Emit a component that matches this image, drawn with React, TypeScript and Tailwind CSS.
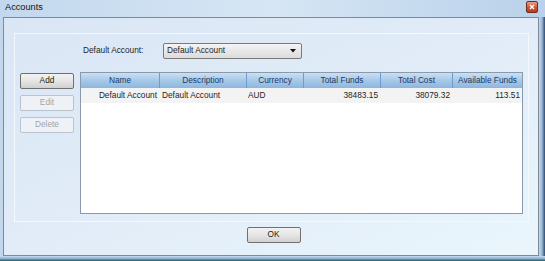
import { useState } from "react";

const columns = [
  { label: "Name", w: "w-[79px]" },
  { label: "Description", w: "w-[87px]" },
  { label: "Currency", w: "w-[57px]" },
  { label: "Total Funds", w: "w-[77px]" },
  { label: "Total Cost", w: "w-[72px]" },
  { label: "Available Funds", w: "flex-1" },
];

const rows = [
  {
    name: "Default Account",
    description: "Default Account",
    currency: "AUD",
    funds: "38483.15",
    cost: "38079.32",
    available: "113.51",
  },
];

function WinButton({ label, disabled }: { label: string; disabled?: boolean }) {
  return (
    <button
      className={`h-[16px] w-[54px] rounded-[2px] border text-[8.3px] leading-none ${
        disabled
          ? "border-[#b8c3cf] bg-[#eef2f6] text-[#a0a6ad]"
          : "border-[#707070] bg-gradient-to-b from-[#f2f2f2] via-[#e6e6e6] to-[#d0d0d0] text-[#1a1a1a]"
      }`}
    >
      {label}
    </button>
  );
}

export default function App() {
  const [account] = useState("Default Account");

  return (
    <div
      className="flex h-[261px] w-[545px] flex-col bg-gradient-to-r from-[#c3d8ee] via-[#d6e6f4] to-[#b9d1ea] text-[#1e1e1e]"
      style={{ fontFamily: '"Liberation Sans", Arial, sans-serif' }}
    >
      {/* title bar */}
      <div className="flex h-[18px] items-center justify-between pl-[5px] pr-[7px]">
        <span className="text-[9.2px] text-[#111]">Accounts</span>
        <div className="mt-[-2px] flex h-[12px] w-[12px] items-center justify-center rounded-[2px] border border-[#6b2b1d] bg-gradient-to-b from-[#e9a08a] via-[#d2553a] to-[#c0391d]">
          <svg width="6" height="6" viewBox="0 0 6 6">
            <path d="M1 1L5 5M5 1L1 5" stroke="#fff" strokeWidth="1.4" />
          </svg>
        </div>
      </div>

      <div className="flex flex-1">
        <div className="w-[3px] bg-[#c2d6ec]" />
        {/* client area */}
        <div className="flex flex-1 flex-col border border-[#7f8a97] bg-gradient-to-br from-[#dbe6f5] via-[#e1ecf8] to-[#eaf6fc] pb-[12px] pl-[10px] pr-[9px] pt-[15px]">
          <div className="flex h-[189px] flex-col border border-[#f3f8fd] pb-[7px] pl-[5px] pr-[5px] pt-[9px]">
            <div className="flex h-[16px] items-center">
              <span className="ml-[63px] w-[80px] text-[8.3px]">Default Account:</span>
              <div className="flex h-[16px] w-[139px] items-center justify-between rounded-[2px] border border-[#7a7a7a] bg-gradient-to-b from-[#f4f4f4] to-[#dcdcdc] pl-[3px] pr-[5px]">
                <span className="text-[8.3px]">{account}</span>
                <svg width="6" height="4" viewBox="0 0 6 4">
                  <path d="M0 0H6L3 3.5Z" fill="#111" />
                </svg>
              </div>
            </div>

            <div className="mt-[13px] flex flex-1 gap-[6px]">
              <div className="flex flex-col gap-[6px] pt-[1px]">
                <WinButton label="Add" />
                <WinButton label="Edit" disabled />
                <WinButton label="Delete" disabled />
              </div>

              <div className="flex flex-1 flex-col border border-[#8a9aab] bg-white">
                <div className="flex h-[15px] bg-gradient-to-b from-[#cbe0f4] via-[#a6c8e8] to-[#8db6de]">
                  {columns.map((c) => (
                    <div
                      key={c.label}
                      className={`${c.w} flex items-center justify-center border-r border-[#6e9ccc] text-[8.3px] text-[#1b3a66] last:border-r-0`}
                    >
                      {c.label}
                    </div>
                  ))}
                </div>
                {rows.map((r) => (
                  <div key={r.name} className="flex h-[15px] items-center bg-[#f3f3f3] text-[8.3px]">
                    <div className="w-[79px] pr-[3px] text-right">{r.name}</div>
                    <div className="w-[87px] pl-[2px]">{r.description}</div>
                    <div className="w-[57px] pl-[1px]">{r.currency}</div>
                    <div className="w-[77px] pr-[3px] text-right">{r.funds}</div>
                    <div className="w-[72px] pr-[3px] text-right">{r.cost}</div>
                    <div className="flex-1 pr-[2px] text-right">{r.available}</div>
                  </div>
                ))}
              </div>
            </div>
          </div>

          <div className="mt-[5px] flex justify-center pl-[4px]">
            <WinButton label="OK" />
          </div>
        </div>
        <div className="w-[6px] bg-gradient-to-r from-[#c3d8ee] via-[#9cb8d8] to-[#2e4a6e]" />
      </div>

      <div className="h-[6px] bg-gradient-to-b from-[#c9dcef] via-[#8fb0cf] to-[#1d5a6a]" />
    </div>
  );
}
